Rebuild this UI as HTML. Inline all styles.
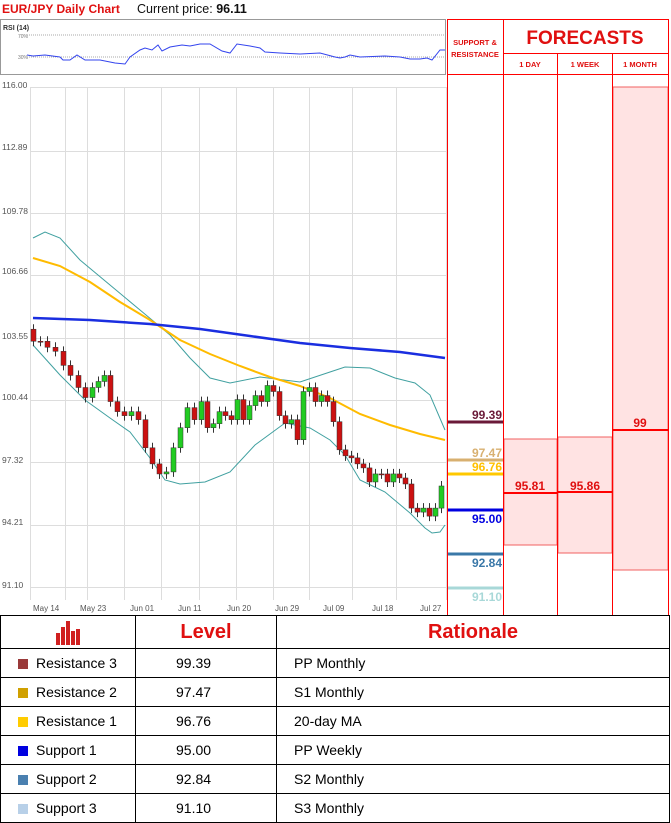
<!DOCTYPE html><html><head><style>
body{margin:0;width:671px;height:820px;background:#fff;font-family:"Liberation Sans",sans-serif;position:relative;overflow:hidden}
.a{position:absolute}
table{border-collapse:collapse;position:absolute;left:0;top:615px;width:670px}
td{border:1px solid #000;height:28px;font-size:14px;padding:0}
.h td{height:32px;font-weight:bold;color:#e01010;font-size:20px;text-align:center}
.sq{display:inline-block;width:10px;height:10px;margin:0 8px 0 17px;vertical-align:-1px}
</style></head><body>
<div class="a" style="left:2px;top:2px;font-size:12px;font-weight:bold;color:#e01010">EUR/JPY Daily Chart</div>
<div class="a" style="left:137px;top:2px;font-size:12.5px;color:#111">Current price: <b>96.11</b></div>
<svg class="a" style="left:0;top:0" width="671" height="615" id="s">
<rect x="0.5" y="19.5" width="445" height="55" fill="#fff" stroke="#999"/>
<text x="3" y="30" font-size="7" font-weight="bold" fill="#333">RSI (14)</text>
<text x="18" y="38" font-size="5" fill="#777">70%</text><text x="18" y="59" font-size="5" fill="#777">30%</text>
<line x1="27" y1="35" x2="444" y2="35" stroke="#aaa" stroke-dasharray="1,1"/>
<line x1="27" y1="57" x2="444" y2="57" stroke="#aaa" stroke-dasharray="1,1"/>
<polyline fill="none" stroke="#3344ee" points="27,55 33,56 45,55 60,57 63,60 70,60 77,55 85,60 100,60 115,63 125,64 130,57 140,50 145,48 152,50 158,45 162,51 170,47 182,45 190,46 200,44 210,44 222,51 230,53 237,44 250,46 260,48 265,52 280,53 300,54 320,53 335,57 340,58 345,57 350,55 360,57 385,56 400,57 410,59 420,59 427,58 432,60 440,50 445,50"/>
<g font-size="8.5" fill="#555">
<text x="2" y="88">116.00</text>
<text x="2" y="150">112.89</text>
<text x="2" y="214">109.78</text>
<text x="2" y="274">106.66</text>
<text x="2" y="339">103.55</text>
<text x="2" y="400">100.44</text>
<text x="2" y="463">97.32</text>
<text x="2" y="525">94.21</text>
<text x="2" y="588">91.10</text></g>
<g id="g" stroke="#ddd" stroke-width="1"></g>
<g font-size="8" fill="#555">
<text x="33" y="611">May 14</text><text x="80" y="611">May 23</text><text x="130" y="611">Jun 01</text><text x="178" y="611">Jun 11</text><text x="227" y="611">Jun 20</text><text x="275" y="611">Jun 29</text><text x="323" y="611">Jul 09</text><text x="372" y="611">Jul 18</text><text x="420" y="611">Jul 27</text></g>
<polyline fill="none" stroke="#40a0a0" stroke-width="1" points="33,238 45,232 60,238 80,260 110,285 140,310 170,335 190,358 210,378 230,383 260,377 300,382 330,372 345,367 370,368 395,378 415,383 430,395 445,430"/>
<polyline fill="none" stroke="#40a0a0" stroke-width="1" points="33,345 60,375 85,400 110,418 130,432 150,458 165,480 180,484 205,482 230,472 255,445 285,423 310,428 330,440 345,455 360,480 385,492 410,513 425,528 432,533 440,532 445,525"/>
<polyline fill="none" stroke="#ffbb00" stroke-width="2" points="33,258 60,266 90,282 120,302 150,320 180,340 210,354 240,366 270,377 300,386 330,398 360,414 390,425 420,434 445,440"/>
<polyline fill="none" stroke="#1a2ee0" stroke-width="2.5" points="33,318 90,320 150,324 200,329 250,336 300,343 350,348 400,352 445,358"/>
<g id="c"></g>
<rect x="504" y="439" width="53" height="106" fill="#ffe3e3" stroke="#f06060"/>
<rect x="558" y="437" width="54" height="116" fill="#ffe3e3" stroke="#f06060"/>
<rect x="613" y="87" width="55" height="483" fill="#ffe3e3" stroke="#f06060"/>
<g stroke="#f00" fill="none"><rect x="447.5" y="19.5" width="221" height="596"/>
<line x1="503.5" y1="19" x2="503.5" y2="615"/><line x1="557.5" y1="53" x2="557.5" y2="615"/><line x1="612.5" y1="53" x2="612.5" y2="615"/>
<line x1="503" y1="53.5" x2="669" y2="53.5"/><line x1="447" y1="74.5" x2="669" y2="74.5"/></g>
<g stroke="#f00" stroke-width="2"><line x1="504" y1="493" x2="557" y2="493"/><line x1="558" y1="492" x2="612" y2="492"/><line x1="613" y1="430" x2="668" y2="430"/></g>
<text x="530" y="490" font-size="12" font-weight="bold" fill="#e01010" text-anchor="middle">95.81</text>
<text x="585" y="490" font-size="12" font-weight="bold" fill="#e01010" text-anchor="middle">95.86</text>
<text x="640" y="427" font-size="12" font-weight="bold" fill="#e01010" text-anchor="middle">99</text>
<text x="585" y="44" font-size="19" font-weight="bold" fill="#e01010" text-anchor="middle">FORECASTS</text>
<g font-size="7.5" font-weight="bold" fill="#e01010" text-anchor="middle"><text x="475" y="45">SUPPORT &amp;</text><text x="475" y="57">RESISTANCE</text>
<text x="530" y="67">1 DAY</text><text x="585" y="67">1 WEEK</text><text x="640" y="67">1 MONTH</text></g>
<g stroke-width="3"><line x1="448" y1="422" x2="503" y2="422" stroke="#6a1a38"/><line x1="448" y1="460" x2="503" y2="460" stroke="#d8b070"/><line x1="448" y1="474" x2="503" y2="474" stroke="#ffc800"/><line x1="448" y1="510" x2="503" y2="510" stroke="#0000e0"/><line x1="448" y1="554" x2="503" y2="554" stroke="#3a78a8"/><line x1="448" y1="588" x2="503" y2="588" stroke="#a8d8d8"/></g>
<g font-size="12" font-weight="bold" text-anchor="end"><text x="502" y="419" fill="#6a1a38">99.39</text><text x="502" y="457" fill="#d8b070">97.47</text><text x="502" y="471" fill="#ffc000">96.76</text><text x="502" y="523" fill="#0000e0">95.00</text><text x="502" y="567" fill="#3a78a8">92.84</text><text x="502" y="601" fill="#a8d8d8">91.10</text></g>
</svg>
<table>
<tr class="h"><td style="width:134px"><svg width="30" height="26" style="vertical-align:middle"><g fill="#d02020"><rect x="3" y="14" width="4" height="12"/><rect x="8" y="8" width="4" height="18"/><rect x="13" y="2" width="4" height="24"/><rect x="18" y="12" width="4" height="14"/><rect x="23" y="10" width="4" height="16"/></g></svg></td><td style="width:140px">Level</td><td>Rationale</td></tr>
<tr><td><span class="sq" style="background:#9a3a3a"></span>Resistance 3</td><td style="padding-left:40px">99.39</td><td style="padding-left:17px">PP Monthly</td></tr>
<tr><td><span class="sq" style="background:#d0a000"></span>Resistance 2</td><td style="padding-left:40px">97.47</td><td style="padding-left:17px">S1 Monthly</td></tr>
<tr><td><span class="sq" style="background:#ffcc00"></span>Resistance 1</td><td style="padding-left:40px">96.76</td><td style="padding-left:17px">20-day MA</td></tr>
<tr><td><span class="sq" style="background:#0000e0"></span>Support 1</td><td style="padding-left:40px">95.00</td><td style="padding-left:17px">PP Weekly</td></tr>
<tr><td><span class="sq" style="background:#4a80b0"></span>Support 2</td><td style="padding-left:40px">92.84</td><td style="padding-left:17px">S2 Monthly</td></tr>
<tr><td><span class="sq" style="background:#b8d0e8"></span>Support 3</td><td style="padding-left:40px">91.10</td><td style="padding-left:17px">S3 Monthly</td></tr>
</table>
<script>
var ns="http://www.w3.org/2000/svg",g=document.getElementById('g'),c=document.getElementById('c');
function el(p,t,a){var e=document.createElementNS(ns,t);for(var k in a)e.setAttribute(k,a[k]);p.appendChild(e);return e}
[87,151,213,275,338,400,462,525,587].forEach(function(y){el(g,'line',{x1:30,y1:y+.5,x2:446,y2:y+.5})});
[30,65,87,124,161,199,236,273,309,352,396,446].forEach(function(x){el(g,'line',{x1:x+.5,y1:87,x2:x+.5,y2:600})});
function Y(p){return 86+(116-p)*20.1}
var d=[[33,103.9,103.3],[40,103.3,103.3],[47,103.3,103.0],[55,103.0,102.8],[63,102.8,102.1],[70,102.1,101.6],[78,101.6,101.0],[85,101.0,100.5],[92,100.5,101.0],[98,101.0,101.3],[104,101.3,101.6],[110,101.6,100.3],[117,100.3,99.8],[124,99.8,99.6],[131,99.6,99.8],[138,99.8,99.4],[145,99.4,98.0],[152,98.0,97.2],[159,97.2,96.7],[166,96.7,96.8],[173,96.8,98.0],[180,98.0,99.0],[187,99.0,100.0],[194,100.0,99.4],[201,99.4,100.3],[207,100.3,99.0],[213,99.0,99.2],[219,99.2,99.8],[225,99.8,99.6],[231,99.6,99.4],[237,99.4,100.4],[243,100.4,99.4],[249,99.4,100.1],[255,100.1,100.6],[261,100.6,100.3],[267,100.3,101.1],[273,101.1,100.8],[279,100.8,99.6],[285,99.6,99.2],[291,99.2,99.4],[297,99.4,98.4],[303,98.4,100.8],[309,100.8,101.0],[315,101.0,100.3],[321,100.3,100.6],[327,100.6,100.3],[333,100.3,99.3],[339,99.3,97.9],[345,97.9,97.6],[351,97.6,97.5],[357,97.5,97.2],[363,97.2,97.0],[369,97.0,96.3],[375,96.3,96.7],[381,96.7,96.7],[387,96.7,96.3],[393,96.3,96.7],[399,96.7,96.5],[405,96.5,96.2],[411,96.2,95.0],[417,95.0,94.8],[423,94.8,95.0],[429,95.0,94.6],[435,94.6,95.0],[441,95.0,96.1]];
d.forEach(function(q){var o=Y(q[1]),cl=Y(q[2]),t=Math.min(o,cl),b=Math.max(o,cl);
el(c,'line',{x1:q[0]+.5,y1:t-5,x2:q[0]+.5,y2:b+5,stroke:'#333'});
el(c,'rect',{x:q[0]-2,y:t,width:5,height:Math.max(1,b-t),fill:q[2]>q[1]?'#22cc22':'#cc1111',stroke:'#333','stroke-width':.5})});
</script>
</body></html>
